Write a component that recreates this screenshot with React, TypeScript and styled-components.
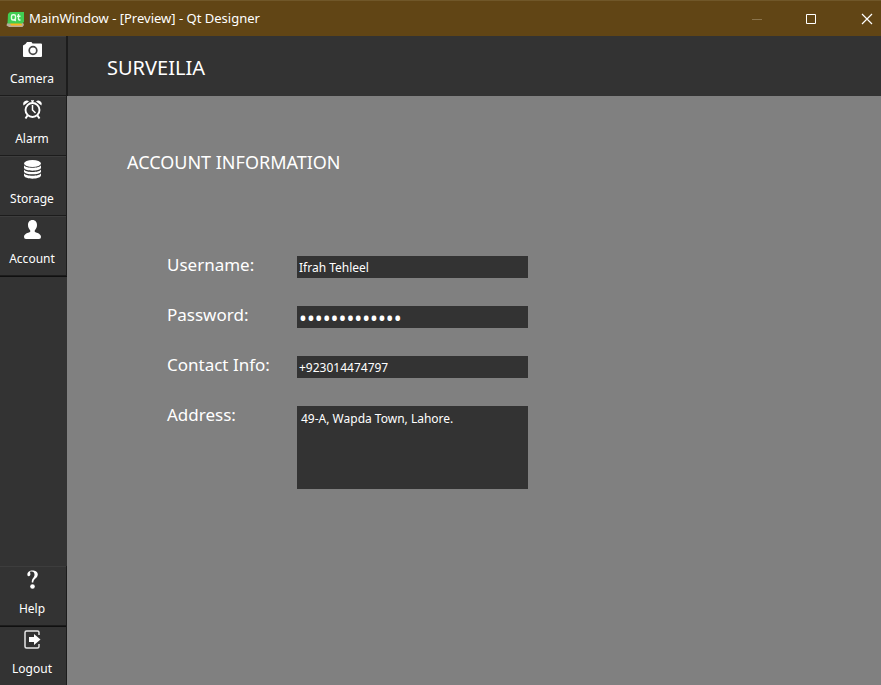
import React from 'react';
import styled, { createGlobalStyle } from 'styled-components';

const GlobalStyle = createGlobalStyle`
  *, *::before, *::after { box-sizing: border-box; }
  body { margin: 0; background: #808080; }
  button, input, textarea { font-family: inherit; }
`;

const Window = styled.div`
  display: flex;
  flex-direction: column;
  min-height: 100vh;
  color: #fff;
  background: #808080;
  font-family: 'Noto Sans', sans-serif;
  font-size: 12px;
`;

const TitleBar = styled.div`
  display: flex;
  align-items: center;
  height: 36px;
  padding-left: 6px;
  background: #614515;
  border-top: 1px solid #705729;
`;

const WindowTitle = styled.div`
  flex: 1;
  margin-left: 4px;
  padding-bottom: 2px;
  font-size: 13px;
  line-height: 18px;
`;

const WindowButton = styled.button<{ $last?: boolean }>`
  display: flex;
  align-items: center;
  justify-content: ${(p) => (p.$last ? 'flex-end' : 'center')};
  width: ${(p) => (p.$last ? '43px' : '54px')};
  height: 34px;
  padding: ${(p) => (p.$last ? '0 8px 0 0' : '0')};
  border: 0;
  color: #fff;
  background: transparent;

  &:disabled { color: #8a744c; }
`;

const Body = styled.div`
  display: flex;
  flex: 1;
`;

const Sidebar = styled.nav`
  display: flex;
  flex-direction: column;
  flex: none;
  width: 67px;
  background: #333;
`;

const NavGroup = styled.div`
  display: flex;
  flex-direction: column;

  &:first-child { border-bottom: 1px solid #101010; }
  &:last-child { margin-top: auto; }
`;

const NavButton = styled.button`
  display: flex;
  flex-direction: column;
  align-items: center;
  height: 60px;
  padding: 3px 2px 0 0;
  border: solid #1c1c1c;
  border-width: 0 1px 1px 0;
  box-shadow: inset 0 1px #3d3d3d;
  color: #fff;
  background: #333;
  font-size: 12px;
  line-height: 18px;

  svg { margin-bottom: 10px; }

  ${NavGroup}:last-child &:last-child {
    height: 59px;
    border-bottom: 0;
    box-shadow: inset 0 1px #101010;
  }
`;

const Main = styled.main`
  flex: 1;
`;

const Header = styled.header`
  display: flex;
  align-items: center;
  height: 60px;
  padding: 3px 40px 0 39px;
  border-left: 1px solid #1c1c1c;
  background: #333;
`;

const Brand = styled.h1`
  margin: 0;
  font-size: 20px;
  font-weight: 400;
  line-height: 28px;
`;

const Content = styled.section`
  padding: 54px 60px 40px;
`;

const Heading = styled.h2`
  margin: 0;
  font-size: 18px;
  font-weight: 400;
  line-height: 24px;
`;

const Form = styled.form`
  display: grid;
  grid-template-columns: 130px minmax(0, 231px);
  row-gap: 28px;
  padding: 82px 0 0 40px;
`;

const Label = styled.label`
  height: 22px;
  font-size: 17px;
  line-height: 18px;
`;

const Input = styled.input`
  width: 100%;
  height: 22px;
  padding: 1px 2px 0;
  border: 0;
  outline: 0;
  color: #fff;
  background: #333;
  font-size: 12px;

  &[type='password'] { font-size: 21px; }
`;

const TextArea = styled.textarea`
  display: block;
  width: 100%;
  height: 83px;
  padding: 4px;
  border: 0;
  outline: 0;
  resize: none;
  color: #fff;
  background: #333;
  font-size: 12px;
  line-height: 18px;
`;

const QtLogo = () => (
  <svg width="19" height="18" viewBox="0 0 19 18" aria-hidden="true">
    <path d="M1 13.500 3 12.500H17L18 15 16.500 17H3L.5 15.500Z" fill="#b9ab98" />
    <path d="M4 13H15L16.500 15.500H5Z" fill="#f9b51c" />
    <path d="M4 2H18V12L16 13.500H1.500L2 4Z" fill="#41cd52" />
    <g fill="none" stroke="#e6ffe8" strokeWidth="1.400">
      <rect x="5.500" y="4.700" width="4" height="5.300" rx="1.500" />
      <path d="M8 9 9.700 11M12.500 4V9Q12.500 10.200 14.500 10M11 6.200H14.500" />
    </g>
  </svg>
);

const CameraIcon = () => (
  <svg width="21" height="21" viewBox="0 0 21 21" aria-hidden="true">
    <path d="M1 6.500 3.500 5 5 3H9.500L10.500 4.500H19Q20 4.500 20 5.500V17Q20 18 19 18H2Q1 18 1 17Z" fill="#fff" />
    <circle cx="11" cy="11.500" r="3.800" fill="#fff" stroke="#484848" strokeWidth="1.700" />
  </svg>
);

const AlarmIcon = () => (
  <svg width="21" height="21" viewBox="0 0 21 21" fill="none" stroke="#fff" aria-hidden="true">
    <circle cx="10.500" cy="11" r="7" strokeWidth="1.900" />
    <path d="M10.500 6V11L13.500 14" strokeWidth="1.500" />
    <path d="M5.500 16.500 3.500 19.500M15.500 16.500 17.500 19.500" strokeWidth="2" />
    <path d="M1.500 6.500A3.500 3.500 0 0 1 7 2.500ZM19.500 6.500A3.500 3.500 0 0 0 14 2.500Z" fill="#fff" stroke="none" />
    <path d="M9 1.800H12M10.500 2V4" strokeWidth="1.200" />
  </svg>
);

const StorageIcon = () => (
  <svg width="21" height="21" viewBox="0 0 21 21" fill="#fff" aria-hidden="true">
    <ellipse cx="10.500" cy="4.500" rx="8.500" ry="3.500" />
    <path d="M2 6C3 9.700 18 9.700 19 6V9C18 12.500 3 12.500 2 9ZM2 10.200C3 13.900 18 13.900 19 10.200V12.700C18 16.200 3 16.200 2 12.700ZM2 14C3 17.700 18 17.700 19 14V16.500C18 20.700 3 20.700 2 16.500Z" />
  </svg>
);

const AccountIcon = () => (
  <svg width="21" height="21" viewBox="0 0 21 21" fill="#fff" aria-hidden="true">
    <path d="M10.500 1C13.500 1 15 3.300 15 6C15 8.500 14 10 12.800 11.200V13C15 14 19 14.500 19 18Q19 20 17 20H4Q2 20 2 18C2 14.500 6 14 8.200 13V11.200C7 10 6 8.500 6 6C6 3.300 7.500 1 10.500 1Z" />
  </svg>
);

const HelpIcon = () => (
  <svg width="21" height="21" viewBox="0 0 21 21" aria-hidden="true">
    <path d="M5.500 6.500C4 0 16 0 15.800 5.500C15.600 9.500 11.300 9.500 11.300 13.500H9.800C9.300 9.500 12.600 8.800 12.500 5.500C12.400 2.700 10.500 2 8 2.800C8 4.500 9 5 8 6.500C7.300 7.500 6 7.500 5.500 6.500Z" fill="#fff" />
    <circle cx="10.500" cy="17.500" r="2.300" fill="#fff" />
  </svg>
);

const LogoutIcon = () => (
  <svg width="21" height="21" viewBox="0 0 21 21" aria-hidden="true">
    <path d="M17 6V3.500Q17 2 15.500 2H4.500Q3 2 3 3.500V17.500Q3 19 4.500 19H15.500Q17 19 17 17.500V15" fill="none" stroke="#e8e8e8" strokeWidth="1.500" />
    <path d="M7 8H12V5L18.500 10.500 12 16V13H7Z" fill="#fff" />
  </svg>
);

const mainItems = [
  { label: 'Camera', Icon: CameraIcon },
  { label: 'Alarm', Icon: AlarmIcon },
  { label: 'Storage', Icon: StorageIcon },
  { label: 'Account', Icon: AccountIcon },
];

const bottomItems = [
  { label: 'Help', Icon: HelpIcon },
  { label: 'Logout', Icon: LogoutIcon },
];

const NavItem = ({ label, Icon }: { label: string; Icon: React.ComponentType }) => (
  <NavButton type="button">
    <Icon />
    {label}
  </NavButton>
);

export default function App() {
  return (
    <Window>
      <GlobalStyle />
      <TitleBar>
        <QtLogo />
        <WindowTitle>MainWindow - [Preview] - Qt Designer</WindowTitle>
        <WindowButton type="button" aria-label="Minimize" disabled>
          <svg width="10" height="10" viewBox="0 0 10 10" aria-hidden="true">
            <path d="M0 5.500H10" stroke="currentColor" />
          </svg>
        </WindowButton>
        <WindowButton type="button" aria-label="Maximize">
          <svg width="10" height="10" viewBox="0 0 10 10" aria-hidden="true">
            <path d="M.5.500H9.500V9.500H.5Z" fill="none" stroke="currentColor" />
          </svg>
        </WindowButton>
        <WindowButton type="button" aria-label="Close" $last>
          <svg width="12" height="12" viewBox="0 0 12 12" aria-hidden="true">
            <path d="M1 1 11 11M11 1 1 11" stroke="currentColor" strokeWidth="1.200" />
          </svg>
        </WindowButton>
      </TitleBar>
      <Body>
        <Sidebar>
          <NavGroup>
            {mainItems.map((item) => (
              <NavItem key={item.label} {...item} />
            ))}
          </NavGroup>
          <NavGroup>
            {bottomItems.map((item) => (
              <NavItem key={item.label} {...item} />
            ))}
          </NavGroup>
        </Sidebar>
        <Main>
          <Header>
            <Brand>SURVEILIA</Brand>
          </Header>
          <Content>
            <Heading>ACCOUNT INFORMATION</Heading>
            <Form>
              <Label htmlFor="username">Username:</Label>
              <Input id="username" defaultValue="Ifrah Tehleel" />
              <Label htmlFor="password">Password:</Label>
              <Input id="password" type="password" autoComplete="off" defaultValue="surveilia1234" />
              <Label htmlFor="contact">Contact Info:</Label>
              <Input id="contact" type="tel" defaultValue="+923014474797" />
              <Label htmlFor="address">Address:</Label>
              <TextArea id="address" defaultValue="49-A, Wapda Town, Lahore." />
            </Form>
          </Content>
        </Main>
      </Body>
    </Window>
  );
}
